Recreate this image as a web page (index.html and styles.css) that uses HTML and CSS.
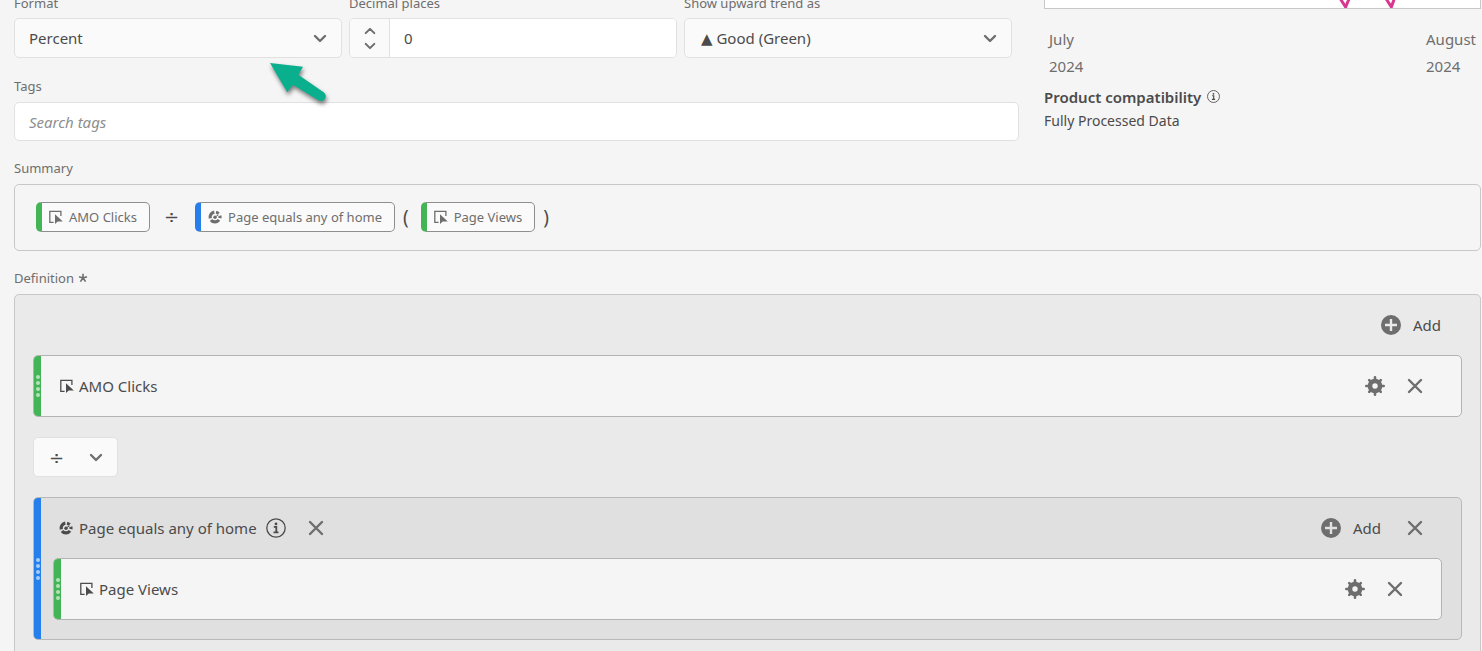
FILE: index.html
```html
<!DOCTYPE html>
<html lang="en">
<head>
    <meta charset="utf-8">
    <title>Calculated metric builder</title>
    <link rel="stylesheet" href="styles.css">
</head>
<body>

<!-- Shared icons -->
<svg class="sprite" aria-hidden="true">
    <symbol id="chevron" viewBox="0 0 14 9">
        <path d="M2 2l5 5 5-5" fill="none" stroke="currentColor" stroke-width="2.4" stroke-linecap="round" stroke-linejoin="round"/>
    </symbol>
    <symbol id="metric" viewBox="0 0 14 14">
        <path d="M4.600 12.300H.8V1.300h11.100v4.600" fill="none" stroke="currentColor" stroke-width="1.300"/>
        <path d="M6 4.300v9.700l2.700-2.500h5.100z" fill="currentColor"/>
    </symbol>
    <symbol id="segment" viewBox="0 0 14 14">
        <path d="M6.300 2.200A5 5 0 0 0 2.300 8.400M3 10A5 5 0 0 0 11 9.900M11.900 8.200A5 5 0 0 0 11.800 5.700M10.600 3.600A5 5 0 0 0 8 2.200" fill="none" stroke="currentColor" stroke-width="3.200"/>
        <circle cx="7" cy="7.200" r="1.700" fill="currentColor"/>
        <path d="M7.500 6.800l3-2" stroke="currentColor" stroke-width="1"/>
    </symbol>
    <symbol id="plus" viewBox="0 0 20 20">
        <circle cx="10" cy="10" r="10" fill="currentColor"/>
        <path d="M10 4v12M4 10h12" class="plus-sign"/>
    </symbol>
    <symbol id="gear" viewBox="0 0 20 20">
        <circle cx="10" cy="10" r="5" fill="none" stroke="currentColor" stroke-width="4.600"/>
        <path d="M10 1.300v3M10 15.700v3M1.300 10h3M15.700 10h3M4.200 4.200l2 2M13.800 13.800l2 2M4.200 15.800l2-2M13.800 6.200l2-2" stroke="currentColor" stroke-width="2.600" stroke-linecap="round"/>
    </symbol>
    <symbol id="cross" viewBox="0 0 16 16">
        <path d="M2 2l12 12M14 2L2 14" stroke="currentColor" stroke-width="2.4" stroke-linecap="round"/>
    </symbol>
    <symbol id="info" viewBox="0 0 20 20">
        <circle cx="10" cy="10" r="9.2" fill="none" stroke="currentColor" stroke-width="1.3"/>
        <circle cx="10" cy="5.9" r="1.4" fill="currentColor"/>
        <path d="M7.8 8.9h2.5v5.2M7.5 14.4h5" fill="none" stroke="currentColor" stroke-width="1.8"/>
    </symbol>
</svg>

<div class="page">
    <div class="top">
        <div class="settings">
            <div class="fields">
                <div class="field">
                    <label for="format">Format</label>
                    <div class="select">
                        <select id="format">
                            <option>Percent</option>
                            <option>Decimal</option>
                            <option>Time</option>
                            <option>Currency</option>
                        </select>
                        <svg class="chevron"><use href="#chevron"/></svg>
                    </div>
                    <svg class="pointer" viewBox="0 0 64 50" aria-hidden="true">
                        <path d="M2 3l33 3.7-4.7 8 25.3 17.6a4.7 4.7 0 0 1-5.3 8L25 24.7l-5.7 7.6z"/>
                    </svg>
                </div>
                <div class="field">
                    <label for="decimals">Decimal places</label>
                    <div class="stepper">
                        <div class="steps">
                            <button type="button" aria-label="Increase"><svg class="step-icon up"><use href="#chevron"/></svg></button>
                            <button type="button" aria-label="Decrease"><svg class="step-icon"><use href="#chevron"/></svg></button>
                        </div>
                        <input type="text" inputmode="numeric" id="decimals" value="0">
                    </div>
                </div>
                <div class="field">
                    <label for="trend">Show upward trend as</label>
                    <div class="select trend">
                        <select id="trend">
                            <option>▲ Good (Green)</option>
                            <option>▲ Bad (Red)</option>
                        </select>
                        <svg class="chevron"><use href="#chevron"/></svg>
                    </div>
                </div>
            </div>
            <div class="field">
                <label for="tags">Tags</label>
                <input type="text" class="tags" id="tags" placeholder="Search tags">
            </div>
        </div>

        <div class="preview">
            <svg class="chart" viewBox="0 0 437 16" preserveAspectRatio="none">
                <path d="M293 0l9 15L308 0M339 0l9 15L353 0"/>
            </svg>
            <div class="axis">
                <span>July<br>2024</span>
                <span>August<br>2024</span>
            </div>
            <h2>Product compatibility <svg class="info-small"><use href="#info"/></svg></h2>
            <p>Fully Processed Data</p>
        </div>
    </div>

    <h3>Summary</h3>
    <div class="summary">
        <span class="chip metric"><svg class="type"><use href="#metric"/></svg>AMO Clicks</span>
        <span class="operator">÷</span>
        <span class="chip segment"><svg class="type"><use href="#segment"/></svg>Page equals any of home</span>
        <span class="paren">(</span>
        <span class="chip metric"><svg class="type"><use href="#metric"/></svg>Page Views</span>
        <span class="paren">)</span>
    </div>

    <h3>Definition <svg class="required" viewBox="0 0 10 10"><path d="M5 5V.8M5 5l4-1.300M5 5l2.600 3.600M5 5L2.400 8.600M5 5L1 3.700"/></svg></h3>
    <div class="definition">
        <div class="toolbar">
            <button type="button" class="add"><svg><use href="#plus"/></svg>Add</button>
        </div>

        <div class="card metric">
            <div class="handle"><i></i><i></i><i></i><i></i></div>
            <svg class="type"><use href="#metric"/></svg>
            <span class="name">AMO Clicks</span>
            <button type="button" class="icon-button" aria-label="Settings"><svg class="gear"><use href="#gear"/></svg></button>
            <button type="button" class="icon-button" aria-label="Remove"><svg class="cross"><use href="#cross"/></svg></button>
        </div>

        <div class="select operator-select">
            <select aria-label="Operator">
                <option>÷</option>
                <option>×</option>
                <option>+</option>
                <option>−</option>
            </select>
            <svg class="chevron"><use href="#chevron"/></svg>
        </div>

        <div class="group segment">
            <div class="handle"><i></i><i></i><i></i><i></i></div>
            <div class="group-body">
                <div class="group-header">
                    <svg class="type"><use href="#segment"/></svg>
                    <span>Page equals any of home</span>
                    <button type="button" class="icon-button" aria-label="Info"><svg class="info"><use href="#info"/></svg></button>
                    <button type="button" class="icon-button" aria-label="Remove segment"><svg class="cross"><use href="#cross"/></svg></button>
                    <button type="button" class="add"><svg><use href="#plus"/></svg>Add</button>
                    <button type="button" class="icon-button" aria-label="Remove group"><svg class="cross"><use href="#cross"/></svg></button>
                </div>
                <div class="card metric">
                    <div class="handle"><i></i><i></i><i></i><i></i></div>
                    <svg class="type"><use href="#metric"/></svg>
                    <span class="name">Page Views</span>
                    <button type="button" class="icon-button" aria-label="Settings"><svg class="gear"><use href="#gear"/></svg></button>
                    <button type="button" class="icon-button" aria-label="Remove"><svg class="cross"><use href="#cross"/></svg></button>
                </div>
            </div>
        </div>
    </div>
</div>

</body>
</html>
```
FILE: styles.css
```css
* {
    box-sizing: border-box;
}
body {
    margin: 0;
    background-color: #f5f5f5;
    color: #4b4b4b;
    font-family: "Noto Sans", "Open Sans", sans-serif;
    font-size: 15px;
    overflow: hidden;
}
button, input, select {
    font: inherit;
    color: inherit;
}
button {
    padding: 0;
    border: none;
    background: none;
    cursor: pointer;
}
svg {
    display: block;
    flex: none;
}
.sprite {
    position: absolute;
    width: 0;
    height: 0;
}
.page {
    margin-top: -7px; /* form is scrolled under the header */
    padding: 0 1px 20px 14px;
}
.top {
    display: grid;
    grid-template-columns: 23fr 10fr;
    column-gap: 25px;
}

/* Form fields */
.fields {
    display: grid;
    grid-template-columns: repeat(3, 1fr);
    gap: 7px;
    padding-right: 7px;
    margin-bottom: 18px;
}
.fields label {
    margin-bottom: 5px;
}
.field {
    position: relative;
}
label, h3 {
    display: block;
    margin: 0 0 6px;
    color: #6e6e6e;
    font-size: 13px;
    font-weight: normal;
    line-height: 20px;
}
.select {
    position: relative;
}
.select select {
    display: block;
    appearance: none;
    width: 100%;
    height: 40px;
    padding: 0 40px 0 14px;
    border: 1px solid #e1e1e1;
    border-radius: 5px;
    background-color: #fafafa;
}
.select.trend select {
    padding-left: 16px;
    font-family: "Noto Sans", "DejaVu Sans", sans-serif;
}
.chevron {
    position: absolute;
    top: 16px;
    right: 15px;
    width: 14px;
    height: 9px;
    color: #6e6e6e;
    pointer-events: none;
}
.stepper {
    display: flex;
    height: 40px;
    border: 1px solid #e1e1e1;
    border-radius: 5px;
    background-color: #fff;
    overflow: hidden;
}
.steps {
    display: flex;
    flex-direction: column;
    justify-content: center;
    width: 40px;
    border-right: 1px solid #e1e1e1;
    background-color: #fafafa;
}
.steps button {
    display: flex;
    align-items: center;
    justify-content: center;
    height: 15px;
}
.step-icon {
    width: 12px;
    height: 8px;
    color: #6e6e6e;
}
.step-icon.up {
    transform: rotate(180deg);
}
.stepper input {
    flex: 1;
    min-width: 0;
    padding: 0 14px;
    border: none;
}
.tags {
    display: block;
    width: 100%;
    height: 39px;
    padding: 0 14px;
    border: 1px solid #e1e1e1;
    border-radius: 5px;
    background-color: #fff;
}
.tags::placeholder {
    color: #8e8e8e;
    font-style: italic;
}
.pointer {
    position: absolute;
    top: 67px;
    right: 10px;
    z-index: 1;
    width: 64px;
    height: 50px;
    fill: #0aaf8e;
    filter: drop-shadow(1px 3px 2px rgba(0, 0, 0, 0.5));
    pointer-events: none;
}

/* Preview column */
.chart {
    width: 100%;
    height: 16px;
    border: 1px solid #c8c8c8;
    border-width: 0 1px 1px;
    background-color: #fff;
}
.chart path {
    fill: none;
    stroke: #d83790;
    stroke-width: 3;
}
.axis {
    display: flex;
    justify-content: space-between;
    margin: 17px 5px 5px;
    color: #6e6e6e;
    line-height: 27px;
}
.preview h2 {
    display: flex;
    gap: 6px;
    margin: 0;
    font-size: 15px;
    font-weight: 600;
    line-height: 24px;
}
.info-small {
    width: 13px;
    height: 13px;
    margin-top: 5px;
}
.preview p {
    margin: 0;
    font-size: 14px;
    line-height: 24px;
}

/* Summary */
h3 {
    display: flex;
    align-items: center;
    gap: 4px;
    margin-top: 17px;
}
.required {
    width: 10px;
    height: 10px;
    fill: none;
    stroke: #6e6e6e;
    stroke-width: 1.6;
}
.summary {
    display: flex;
    align-items: center;
    padding: 17px 21px 18px;
    border: 1px solid #c8c8c8;
    border-radius: 5px;
}
.chip {
    display: flex;
    align-items: center;
    gap: 6px;
    height: 30px;
    padding: 0 12px 0 7px;
    border: 1px solid #8e8e8e;
    border-left: 6px solid;
    border-radius: 5px;
    background-color: #fafafa;
    color: #6e6e6e;
    font-size: 13px;
}
.chip.metric {
    border-left-color: #44b556;
}
.chip.segment {
    border-left-color: #2680eb;
}
.type {
    width: 14px;
    height: 14px;
}
.operator {
    margin: 0 16px 0 14px;
    font-family: "DejaVu Sans", sans-serif;
    font-size: 18px;
    line-height: 30px;
}
.paren {
    margin: 0 12px 0 8px;
    font-size: 19px;
    line-height: 30px;
}

/* Definition */
.definition {
    padding: 0 18px 20px;
    border: 1px solid #c8c8c8;
    border-radius: 5px;
    background-color: #eaeaea;
    --surface: #eaeaea;
}
.toolbar {
    display: flex;
    align-items: center;
    justify-content: flex-end;
    height: 60px;
    padding-right: 21px;
}
.add {
    display: flex;
    align-items: center;
    gap: 12px;
}
.add svg {
    width: 20px;
    height: 20px;
    color: #6e6e6e;
}
.plus-sign {
    stroke: var(--surface);
    stroke-width: 2.4;
}
.card {
    display: flex;
    align-items: center;
    height: 62px;
    padding-right: 36px;
    border: 1px solid #b3b3b3;
    border-radius: 5px;
    background-color: #f5f5f5;
    overflow: hidden;
}
.handle {
    display: flex;
    flex: none;
    flex-direction: column;
    align-items: center;
    justify-content: center;
    gap: 2px;
    width: 7px;
}
.handle i {
    width: 4px;
    height: 4px;
    border-radius: 50%;
    background-color: rgba(255, 255, 255, 0.6);
}
.card .handle {
    align-self: stretch;
    margin-right: 19px;
    background-color: #44b556;
}
.name {
    flex: 1;
    margin-left: 5px;
}
.icon-button {
    display: flex;
    align-items: center;
    justify-content: center;
    width: 20px;
    height: 20px;
    color: #6e6e6e;
}
.card .icon-button {
    margin-left: 20px;
}
.gear {
    width: 20px;
    height: 20px;
}
.cross {
    width: 16px;
    height: 16px;
}
.info {
    width: 20px;
    height: 20px;
    color: #4b4b4b;
}
.operator-select {
    width: 85px;
    margin: 20px 0;
}
.operator-select select {
    padding: 0 30px 0 15px;
    font-family: "DejaVu Sans", sans-serif;
    font-size: 18px;
}
.group {
    display: flex;
    border: 1px solid #b9b9b9;
    border-radius: 5px;
    background-color: #e0e0e0;
    overflow: hidden;
    --surface: #e0e0e0;
}
.group > .handle {
    background-color: #2680eb;
}
.group-body {
    flex: 1;
    padding: 0 19px 19px 12px;
}
.group-header {
    display: flex;
    align-items: center;
    height: 60px;
    padding: 0 17px 0 6px;
}
.group-header span {
    margin: 0 9px 0 6px;
}
.group-header .icon-button + .icon-button {
    margin-left: 20px;
}
.group-header .add {
    margin: 0 24px 0 auto;
}
```
